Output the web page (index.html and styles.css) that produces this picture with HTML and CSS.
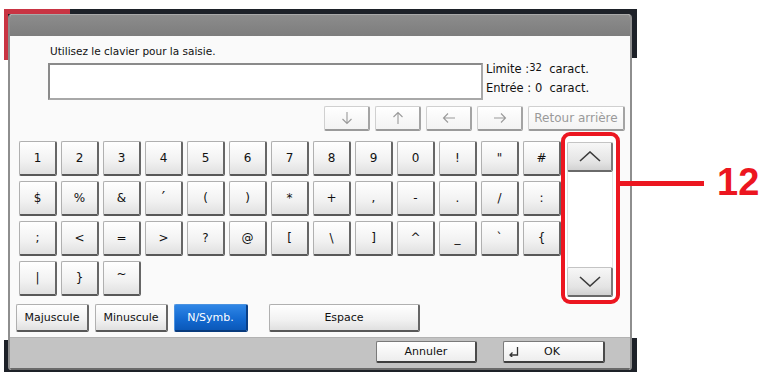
FILE: index.html
```html
<!DOCTYPE html>
<html lang="fr">
<head>
    <meta charset="UTF-8">
    <meta name="viewport" content="width=device-width, initial-scale=1.0">
    <title>Clavier</title>
    <link rel="stylesheet" href="styles.css">
</head>
<body>

    <div class="frame">
        <div class="dialog">
            <div class="titlebar"></div>

            <div class="content">
                <div class="entry">
                    <div class="entry-main">
                        <p class="prompt">Utilisez le clavier pour la saisie.</p>
                        <div class="textbox"></div>
                    </div>
                    <div class="limits">
                        <p>Limite :<span class="num">32</span>&nbsp; caract.</p>
                        <p>Entrée : 0&nbsp; caract.</p>
                    </div>
                </div>

                <div class="nav-row">
                    <button class="btn nav-btn">
                        <svg width="14" height="14" viewBox="0 0 14 14"><path d="M7 1v11.5M2.5 8 7 12.5 11.5 8"/></svg>
                    </button>
                    <button class="btn nav-btn">
                        <svg width="14" height="14" viewBox="0 0 14 14"><path d="M7 13V1.5M2.5 6 7 1.5 11.5 6"/></svg>
                    </button>
                    <button class="btn nav-btn">
                        <svg width="14" height="14" viewBox="0 0 14 14"><path d="M13 7H1.5M6 2.5 1.5 7 6 11.5"/></svg>
                    </button>
                    <button class="btn nav-btn">
                        <svg width="14" height="14" viewBox="0 0 14 14"><path d="M1 7h11.5M8 2.5 12.5 7 8 11.5"/></svg>
                    </button>
                    <button class="btn nav-btn back-btn">Retour arrière</button>
                </div>

                <div class="main">
                    <div class="keys">
                        <button class="btn key">1</button>
                        <button class="btn key">2</button>
                        <button class="btn key">3</button>
                        <button class="btn key">4</button>
                        <button class="btn key">5</button>
                        <button class="btn key">6</button>
                        <button class="btn key">7</button>
                        <button class="btn key">8</button>
                        <button class="btn key">9</button>
                        <button class="btn key">0</button>
                        <button class="btn key">!</button>
                        <button class="btn key">"</button>
                        <button class="btn key">#</button>

                        <button class="btn key">$</button>
                        <button class="btn key">%</button>
                        <button class="btn key">&amp;</button>
                        <button class="btn key key-prime">′</button>
                        <button class="btn key">(</button>
                        <button class="btn key">)</button>
                        <button class="btn key">*</button>
                        <button class="btn key">+</button>
                        <button class="btn key">,</button>
                        <button class="btn key">-</button>
                        <button class="btn key">.</button>
                        <button class="btn key">/</button>
                        <button class="btn key">:</button>

                        <button class="btn key">;</button>
                        <button class="btn key">&lt;</button>
                        <button class="btn key">=</button>
                        <button class="btn key">&gt;</button>
                        <button class="btn key">?</button>
                        <button class="btn key">@</button>
                        <button class="btn key">[</button>
                        <button class="btn key">\</button>
                        <button class="btn key">]</button>
                        <button class="btn key">^</button>
                        <button class="btn key">_</button>
                        <button class="btn key">`</button>
                        <button class="btn key">{</button>

                        <button class="btn key">|</button>
                        <button class="btn key">}</button>
                        <button class="btn key key-high">~</button>
                    </div>

                    <div class="scroller">
                        <button class="btn scroll-btn">
                            <svg width="22" height="11" viewBox="0 0 22 11"><path d="M1 10 11 1l10 9"/></svg>
                        </button>
                        <div class="track"></div>
                        <button class="btn scroll-btn">
                            <svg width="22" height="11" viewBox="0 0 22 11"><path d="M1 1l10 9 10-9"/></svg>
                        </button>
                    </div>
                </div>

                <div class="mode-row">
                    <button class="btn mode-btn">Majuscule</button>
                    <button class="btn mode-btn">Minuscule</button>
                    <button class="btn mode-btn active">N/Symb.</button>
                    <button class="btn space-btn">Espace</button>
                </div>
            </div>

            <div class="footer">
                <button class="btn foot-btn">Annuler</button>
                <button class="btn foot-btn ok-btn">
                    <svg width="11" height="11" viewBox="0 0 11 11"><path d="M9.5 1v8H2M4.5 6.5 2 9l2.5 2.5"/></svg>
                    <span>OK</span>
                </button>
            </div>
        </div>
    </div>

    <div class="callout">
        <div class="callout-line"></div>
        <span class="callout-num">12</span>
    </div>

</body>
</html>
```

FILE: styles.css
```css
body {
    margin: 0;
    background: #ffffff;
    font-family: 'DejaVu Sans', sans-serif;
    font-size: 10.5px;
    color: #111111;
}
p {
    margin: 0;
}
.frame {
    width: 633px;
    height: 363px;
    margin: 9px 0 0 4px;
    padding: 5px 5px 2px 4px;
    box-sizing: border-box;
    background:
        linear-gradient(#c93443, #c93443) 0 0 / 66px 5px no-repeat,
        linear-gradient(#c93443, #c93443) 0 0 / 4px 51px no-repeat,
        linear-gradient(#ffffff, #ffffff) 0 51px / 4px 280px no-repeat,
        linear-gradient(#ffffff, #ffffff) right 49px / 5px 280px no-repeat,
        #1d2128;
}
.dialog {
    width: 624px;
    height: 356px;
    display: flex;
    flex-direction: column;
    border-radius: 4px 4px 3px 3px;
    overflow: hidden;
    background: #fafafa;
    border-left: 2px solid #8e8e8e;
    border-right: 2px solid #8e8e8e;
    box-sizing: border-box;
}
.titlebar {
    height: 22px;
    background: linear-gradient(#8c8c8c, #7d7d7d);
    border-top: 1px solid #a9a9a9;
    box-sizing: border-box;
}
.content {
    height: 301px;
    display: flex;
    flex-direction: column;
}
.entry {
    height: 70px;
    display: flex;
    padding-left: 38px;
}
.entry-main {
    width: 435px;
}
.prompt {
    padding: 8px 0 0 2px;
    line-height: 14px;
}
.textbox {
    height: 37px;
    margin-top: 5px;
    background: #ffffff;
    border: 2px solid #8a8a8a;
    border-right-color: #a8a8a8;
    border-bottom-color: #a8a8a8;
    box-sizing: border-box;
}
.limits {
    margin-left: 3px;
    padding-top: 24px;
    font-size: 11.5px;
    line-height: 19px;
    white-space: nowrap;
}
.limits .num {
    font-size: 10px;
    position: relative;
    top: -2px;
}
.btn {
    font-family: 'DejaVu Sans', sans-serif;
    font-size: 11px;
    color: #111111;
    padding: 0;
    background: linear-gradient(#ffffff, #f1f1f1 60%, #e0e0e0);
    border-style: solid;
    border-width: 1px 2px 2px 1px;
    border-color: #b0b0b0 #666666 #585858 #b0b0b0;
    border-radius: 2px;
    box-sizing: border-box;
    display: flex;
    align-items: center;
    justify-content: center;
}
.nav-row {
    height: 25px;
    display: flex;
    justify-content: flex-end;
    gap: 5px;
    padding-right: 5px;
}
.nav-btn {
    width: 46px;
    height: 25px;
    border-color: #d0d0d0 #a4a4a4 #9a9a9a #d0d0d0;
    background: linear-gradient(#ffffff, #f3f3f3);
    color: #9a9a9a;
}
.nav-btn svg path {
    fill: none;
    stroke: #9a9a9a;
    stroke-width: 1.1;
}
.back-btn {
    width: 97px;
    font-size: 12px;
}
.main {
    height: 172px;
    margin-top: 1px;
    display: flex;
}
.keys {
    margin: 9px 0 0 9px;
    display: grid;
    grid-template-columns: repeat(13, 38px);
    grid-auto-rows: 35px;
    gap: 5px 4px;
    align-content: start;
}
.key {
    font-size: 12px;
}
.key-prime {
    font-size: 15px;
}
.key-high {
    align-items: flex-start;
    padding-top: 5px;
}
.scroller {
    width: 59px;
    height: 172px;
    border: 4px solid #ec1620;
    border-radius: 9px;
    background: #ffffff;
    box-sizing: border-box;
    display: flex;
    flex-direction: column;
    padding: 6px 3px 3px 2px;
}
.scroll-btn {
    height: 30px;
    flex-shrink: 0;
    background: linear-gradient(#f7f7f7, #e4e4e4 70%, #d2d2d2);
    border-color: #c4c4c4 #7a7a7a #6a6a6a #c4c4c4;
}
.scroll-btn svg path {
    fill: none;
    stroke: #3c3c3c;
    stroke-width: 1.6;
}
.track {
    flex: 1;
    border-left: 1px solid #e4e4e4;
    border-right: 1px solid #e4e4e4;
}
.mode-row {
    height: 28px;
    display: flex;
    gap: 6px;
    padding-left: 6px;
}
.mode-btn {
    width: 73px;
}
.mode-btn.active {
    width: 74px;
    color: #ffffff;
    background: linear-gradient(#2f86e6, #1268cf 60%, #0b58b8);
    border-color: #4a92e0 #0a3f86 #083a7c #4a92e0;
}
.space-btn {
    width: 151px;
    margin-left: 15px;
}
.footer {
    flex: 1;
    display: flex;
    justify-content: flex-end;
    gap: 26px;
    padding: 3px 25px 0 0;
    background: #c3c3c3;
    border-top: 1px solid #b2b2b2;
    border-bottom: 2px solid #6a6a6a;
}
.foot-btn {
    width: 101px;
    height: 22px;
    border-width: 1px 2px 2px 1px;
    border-color: #7a7a7a #4a4a4a #3e3e3e #7a7a7a;
    background: linear-gradient(#ffffff, #ededed);
    font-size: 11px;
}
.ok-btn {
    width: 102px;
    justify-content: flex-start;
    padding-left: 4px;
}
.ok-btn svg path {
    fill: none;
    stroke: #333333;
    stroke-width: 1.3;
}
.ok-btn span {
    flex: 1;
    text-align: center;
    padding-right: 18px;
}
.callout {
    position: absolute;
    left: 620px;
    top: 160px;
    display: flex;
    align-items: center;
}
.callout-line {
    width: 84px;
    height: 5px;
    background: #ec1620;
    margin-top: 3px;
}
.callout-num {
    margin-left: 13px;
    font-family: 'Liberation Sans', Arial, sans-serif;
    font-weight: bold;
    font-size: 38px;
    line-height: 44px;
    color: #ec1620;
}
```
